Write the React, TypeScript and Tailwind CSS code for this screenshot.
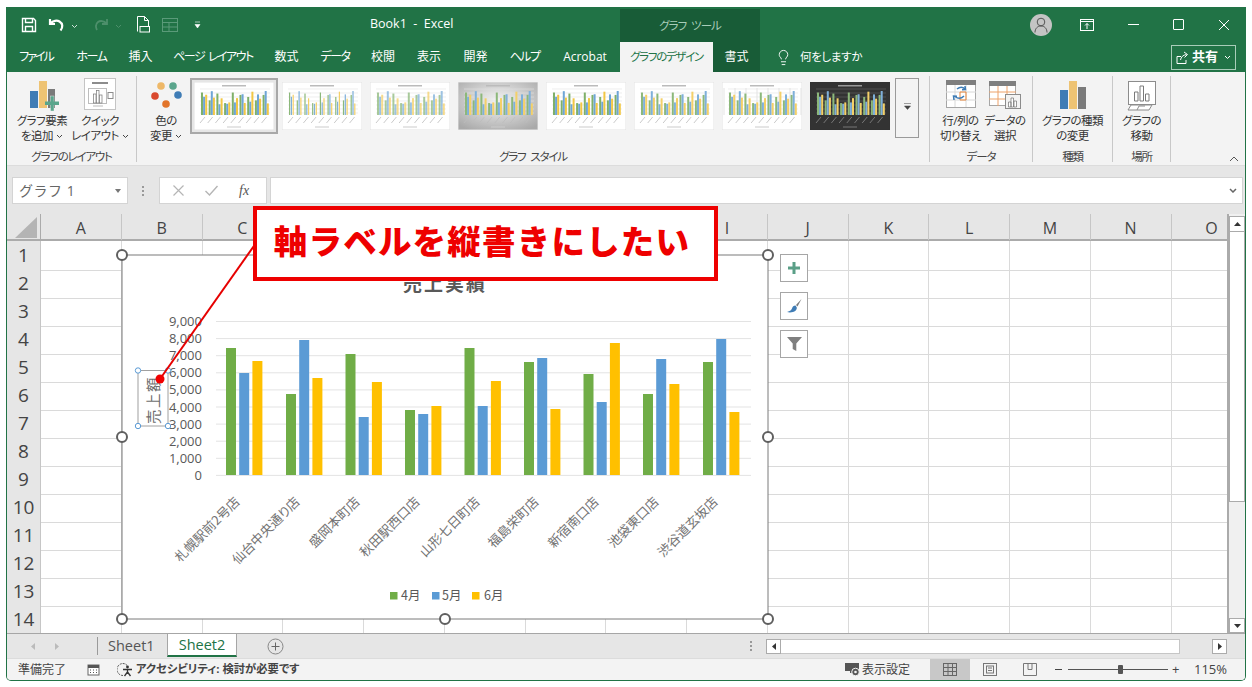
import { Lightbulb } from "lucide-react";

const columns = ["A", "B", "C", "D", "E", "F", "G", "H", "I", "J", "K", "L", "M", "N", "O"];
const rows = [1, 2, 3, 4, 5, 6, 7, 8, 9, 10, 11, 12, 13, 14];
const tabs = [
  { label: "ファイル", width: "w-[58px] tracking-[-2px]" },
  { label: "ホーム", width: "w-[53px] tracking-[-1.500px]" },
  { label: "挿入", width: "w-[45px]" },
  { label: "ページ レイアウト", width: "w-[100px] tracking-[-1.500px] [word-spacing:2px]" },
  { label: "数式", width: "w-[47px]" },
  { label: "データ", width: "w-[50px] tracking-[-1.500px]" },
  { label: "校閲", width: "w-[46px]" },
  { label: "表示", width: "w-[46px]" },
  { label: "開発", width: "w-[47px]" },
  { label: "ヘルプ", width: "w-[51px] tracking-[-1.500px]" },
  { label: "Acrobat", width: "w-[70px]" },
];

// bar tops in page pixels, read off the picture: [4月, 5月, 6月]
const barTops = [
  [348, 373, 361],
  [394, 340, 378],
  [354, 417, 382],
  [410, 414, 406],
  [348, 406, 381],
  [362, 358, 409],
  [374, 402, 343],
  [394, 359, 384],
  [362, 339, 412],
];
const groupLefts = [226, 286, 345.5, 405, 464.5, 524, 583.5, 643, 703];
const stores = [
  { name: "札幌駅前2号店", x: 237 },
  { name: "仙台中央通り店", x: 297 },
  { name: "盛岡本町店", x: 357 },
  { name: "秋田駅西口店", x: 417 },
  { name: "山形七日町店", x: 477 },
  { name: "福島栄町店", x: 536 },
  { name: "新宿南口店", x: 596 },
  { name: "池袋東口店", x: 656 },
  { name: "渋谷道玄坂店", x: 715 },
];
const ticks = ["9,000", "8,000", "7,000", "6,000", "5,000", "4,000", "3,000", "2,000", "1,000", "0"];
const seriesColors = ["#70ad47", "#5b9bd5", "#ffc000"];
const handles = [
  [122, 255],
  [768, 255],
  [122, 437],
  [768, 437],
  [122, 619],
  [445, 619],
  [768, 619],
];

const Chevron = ({ color = "#444" }: { color?: string }) => (
  <svg width="7" height="5" viewBox="0 0 7 5" className="inline-block ml-[3px] align-middle">
    <path d="M1 1l2.5 2.5L6 1" fill="none" stroke={color} strokeWidth="1" />
  </svg>
);

const MiniChart = ({ bg, dark, grid, thin, striped, heavy }: { bg: string; dark?: boolean; grid?: boolean; thin?: boolean; striped?: boolean; heavy?: boolean }) => {
  const colors = heavy ? ["#7fb069", "#6ea5d6", "#f2c744"] : ["#8cb87a", "#7fb0da", "#f4d068"];
  return (
    <svg width="80" height="48" viewBox="0 0 80 48" className="block">
      <defs>
        <radialGradient id="thumbGray" cx="50%" cy="40%" r="70%">
          <stop offset="0%" stopColor="#f4f4f4" />
          <stop offset="100%" stopColor="#a9a9a9" />
        </radialGradient>
      </defs>
      <rect width="80" height="48" fill={bg} stroke={dark ? "#333" : "#e2e2e2"} strokeWidth="1" />
      <rect x="28" y="3" width="24" height="1.5" fill={dark ? "#999" : "#bbb"} />
      {grid &&
        [0, 1, 2, 3, 4, 5, 6, 7].map((i) => <line key={i} x1={i * 11 + 2} y1="6" x2={i * 11 + 2} y2="33" stroke="#e3e3e3" />)}
      {[7, 11, 15, 19, 23, 27, 31].map((y) => (
        <line key={y} x1="6" y1={y} x2="76" y2={y} stroke={dark ? "#666" : "#e2e2e2"} strokeWidth="0.6" />
      ))}
      {barTops.map((group, i) =>
        group.map((top, s) => (
          <rect
            key={`${i}-${s}`}
            x={7 + i * 7.7 + s * (thin ? 1.8 : 2.1)}
            y={(top - 339) * 0.17 + 9}
            width={thin ? 1.2 : 2}
            height={33 - ((top - 339) * 0.17 + 9)}
            fill={colors[s]}
            opacity={striped ? 0.75 : 1}
          />
        ))
      )}
      {barTops.map((_, i) => (
        <line key={i} x1={6 + i * 7.7} y1="41" x2={11 + i * 7.7} y2="35" stroke={dark ? "#888" : "#bdbdbd"} strokeWidth="0.8" />
      ))}
      <rect x="33" y="44.5" width="14" height="1" fill={dark ? "#777" : "#ccc"} />
    </svg>
  );
};

const AddElementIcon = () => (
  <svg width="30" height="30" viewBox="0 0 30 30" className="mt-[2px]">
    <rect x="1" y="10" width="8" height="17" fill="#3f7cb5" />
    <rect x="10" y="0" width="8" height="27" fill="#eec373" />
    <rect x="19" y="8" width="7" height="19" fill="#7a7a7a" />
    <rect x="21.500" y="15" width="3.500" height="15" fill="#5aa58c" stroke="#f3f3f3" strokeWidth="0.4" />
    <rect x="16" y="20.500" width="14" height="3.500" fill="#5aa58c" />
  </svg>
);

const QuickLayoutIcon = () => (
  <svg width="32" height="32" viewBox="0 0 32 32" className="-mt-[1px]">
    <rect x="0.5" y="0.5" width="31" height="31" fill="#fff" stroke="#c4c4c4" />
    <rect x="8" y="4" width="16" height="2" fill="#8c8c8c" />
    <rect x="4.5" y="10.5" width="18" height="15" fill="#fff" stroke="#bdbdbd" />
    <rect x="9.5" y="16" width="2.5" height="9" fill="#fff" stroke="#777" strokeWidth="0.7" />
    <rect x="12.5" y="12.5" width="2.5" height="12.5" fill="#fff" stroke="#777" strokeWidth="0.7" />
    <rect x="15.5" y="17" width="2.5" height="8" fill="#fff" stroke="#777" strokeWidth="0.7" />
    <rect x="24" y="14.5" width="5" height="6" fill="#fff" stroke="#8c8c8c" />
    <rect x="9" y="27.5" width="10" height="1" fill="#bbb" />
  </svg>
);

const ColorIcon = () => (
  <svg width="32" height="30" viewBox="0 0 32 30" className="mt-[2px]">
    <circle cx="11" cy="5" r="3.800" fill="#eeb868" />
    <circle cx="23" cy="5" r="3.800" fill="#5aa58c" />
    <circle cx="5" cy="15" r="3.800" fill="#d9492e" />
    <circle cx="28" cy="14" r="3.800" fill="#3f7cb5" />
    <circle cx="16" cy="23" r="3.800" fill="#e2742a" />
  </svg>
);

const SwitchIcon = () => (
  <svg width="30" height="28" viewBox="0 0 30 28" className="mt-[1px]">
    <rect x="0.5" y="0.5" width="29" height="27" fill="#fff" stroke="#a6a6a6" />
    <rect x="0" y="0" width="30" height="5" fill="#7f7f7f" />
    <path d="M9 5v22M20 5v22M0 12h30M0 20h30" stroke="#d8d8d8" />
    <path d="M14 12h6v8h-6z" fill="none" stroke="#e8853a" />
    <path d="M11 9c3-2.5 6-2 8 0M19 6l.5 3.5-3.5.2" fill="none" stroke="#3f7cb5" strokeWidth="1.5" />
    <path d="M18 16c-3 3-6 3-9 .5M8 20l-.5-4 3.5.2" fill="none" stroke="#3f7cb5" strokeWidth="1.5" />
  </svg>
);

const SelectDataIcon = () => (
  <svg width="32" height="28" viewBox="0 0 32 28" className="mt-[2px]">
    <rect x="0.5" y="0.5" width="26" height="24" fill="#fff" stroke="#a6a6a6" />
    <rect x="0" y="0" width="27" height="5" fill="#7f7f7f" />
    <path d="M9 5v20M18 5v20M0 11h27M0 18h27" stroke="#eda26a" />
    <rect x="16.5" y="13.5" width="15" height="14" fill="#f3f3f3" stroke="#8c8c8c" />
    <path d="M19.5 26v-5h2.5v5zM22 26v-9h2.5v9zM25 26v-6h2.5v6z" fill="#fff" stroke="#6e6e6e" strokeWidth="0.7" />
  </svg>
);

const ChangeTypeIcon = () => (
  <svg width="30" height="30" viewBox="0 0 30 30" className="mt-[2px]">
    <rect x="2" y="9" width="8" height="19" fill="#3f7cb5" />
    <rect x="11" y="0" width="8" height="28" fill="#eec373" />
    <rect x="20" y="6" width="8" height="22" fill="#7a7a7a" />
  </svg>
);

const MoveIcon = () => (
  <svg width="30" height="30" viewBox="0 0 30 30" className="mt-[2px]">
    <rect x="1.5" y="0.5" width="27" height="23" fill="#fff" stroke="#8c8c8c" />
    <path d="M7.5 20v-9h3.5v9zM13 20V5h3.500v15zM18.5 20v-7H22v7z" fill="#fff" stroke="#7a7a7a" />
    <path d="M1 29l3-5h21l-3 5zM10 29l2-4h6" fill="#fff" stroke="#8c8c8c" />
  </svg>
);

const RibbonLabel = ({ children }: { children: React.ReactNode }) => (
  <div className="text-[11.5px] leading-[15px] tracking-[-0.5px] text-[#333] text-center whitespace-nowrap">{children}</div>
);

const GroupTitle = ({ children }: { children: React.ReactNode }) => (
  <div className="h-[18px] text-[11.5px] leading-[26px] tracking-[-1.200px] [word-spacing:3px] text-[#444] text-center whitespace-nowrap">{children}</div>
);

export default function App() {
  return (
    <div className="relative w-[1252px] h-[687px] overflow-hidden bg-white pt-[7px] pl-[6px] [font-family:'Open_Sans','Noto_Sans_CJK_JP',sans-serif] [font-feature-settings:'palt']">
      <div className="flex flex-col w-[1240px] h-[674px] border-l border-r border-b border-[#217346] rounded-b-[5px] overflow-hidden bg-[#f3f3f3]">
        {/* title bar */}
        <div className="flex items-stretch h-[35px] bg-[#217346] text-white shrink-0">
          <div className="flex items-center w-[363px] pl-[14px] gap-[11px]">
            <svg width="16" height="16" viewBox="0 0 16 16">
              <path d="M1.5 1.5h11l2 2v11h-13z" fill="none" stroke="#fff" strokeWidth="1.4" />
              <path d="M4.5 1.5v4h7v-4M4.5 14.5v-5h7v5" fill="none" stroke="#fff" strokeWidth="1.4" />
            </svg>
            <svg width="17" height="15" viewBox="0 0 17 15">
              <path d="M2 2v5h5M2.5 6.5C5 3.5 9 3 11.5 4.5 15 6.5 15 10.5 12.5 13.5" fill="none" stroke="#fff" strokeWidth="2.2" />
            </svg>
            <div className="-ml-[8px]"><Chevron color="#cfe3d8" /></div>
            <svg width="15" height="13" viewBox="0 0 15 13" className="ml-[5px]">
              <path d="M13 1v5H8M12.5 5.500C10 2.500 6 2.500 4 4 1.500 6 1.500 9 3 12" fill="none" stroke="#4d8f6b" strokeWidth="1.800" />
            </svg>
            <div className="-ml-[8px]"><Chevron color="#4d8f6b" /></div>
            <svg width="14" height="17" viewBox="0 0 14 17" className="ml-[3px]">
              <path d="M1.500 15.500v-15h7l4 4v6M8.500 .5v4h4" fill="none" stroke="#fff" strokeWidth="1" />
              <rect x="4" y="10.500" width="9.500" height="5.500" fill="#217346" stroke="#fff" />
            </svg>
            <svg width="16" height="14" viewBox="0 0 16 14" className="ml-[1px]">
              <rect x="0.5" y="0.5" width="15" height="13" fill="none" stroke="#5a9a79" />
              <path d="M0 4.500h16M0 9h16M7 4.500V14" stroke="#5a9a79" />
            </svg>
            <svg width="7" height="8" viewBox="0 0 7 8" className="ml-[5px]">
              <path d="M1 1h5M1 3.500h5L3.500 7z" fill="#fff" stroke="#fff" strokeWidth="0.6" />
            </svg>
          </div>
          <div className="flex items-center w-[250px] text-[12.5px]">Book1&nbsp; -&nbsp; Excel</div>
          <div className="flex items-center justify-center w-[140px] bg-[#185c37] text-[11.5px] tracking-[-1px] [word-spacing:3px] text-[#a9cdb9] mt-[2px]">グラフ ツール</div>
          <div className="flex-1 flex items-center pl-[270px]">
            <div className="w-[22px] h-[22px] rounded-full bg-[#c4c4c4] flex items-center justify-center">
              <svg width="14" height="16" viewBox="0 0 14 16">
                <circle cx="7" cy="5" r="3.800" fill="none" stroke="#555" />
                <path d="M1 15.500c0-4 2.500-6.500 6-6.500s6 2.500 6 6.500" fill="none" stroke="#555" />
              </svg>
            </div>
            <svg width="14" height="13" viewBox="0 0 14 13" className="ml-[28px]">
              <rect x="0.500" y="1.500" width="13" height="11" fill="none" stroke="#fff" />
              <path d="M0 3.500h14M7 11V5.500M5 7.500l2-2 2 2" fill="none" stroke="#fff" />
            </svg>
            <div className="ml-[34px] w-[11px] h-[1px] bg-white" />
            <div className="ml-[34px] w-[11px] h-[11px] border border-white rounded-[1px]" />
            <svg width="12" height="12" viewBox="0 0 12 12" className="ml-[34px]">
              <path d="M1 1l10 10M11 1L1 11" stroke="#fff" strokeWidth="1" />
            </svg>
          </div>
        </div>

        {/* tab row */}
        <div className="flex items-stretch h-[30px] bg-[#217346] text-white text-[12px] shrink-0">
          {tabs.map((tab) => (
            <div key={tab.label} className={`flex items-center justify-center whitespace-nowrap ${tab.width}`}>
              {tab.label}
            </div>
          ))}
          <div className="flex items-center justify-center w-[93px] bg-[#f3f3f3] text-[#217346] text-[11.5px] tracking-[-1.300px] whitespace-nowrap">グラフのデザイン</div>
          <div className="flex items-center justify-center w-[47px] bg-[#185c37]">書式</div>
          <div className="flex items-center ml-[15px] gap-[8px] text-[11.5px] tracking-[-0.3px]">
            <Lightbulb size={17} strokeWidth={1.300} />
            <span>何をしますか</span>
          </div>
          <div className="flex-1" />
          <div className="flex items-center justify-center self-center w-[65px] h-[25px] mr-[9px] border border-[#a9cdb9] gap-[3px]">
            <svg width="13" height="13" viewBox="0 0 13 13">
              <path d="M1 5.500v7h9V9M1 5.500h4M4.500 9c.5-3 2.500-5 6-5.500M8 1l3.500 2.500L8.500 6.500" fill="none" stroke="#fff" />
            </svg>
            <span className="font-bold text-[13px]">共有</span>
            <Chevron color="#fff" />
          </div>
        </div>

        {/* ribbon */}
        <div className="flex h-[93px] bg-[#f3f3f3] shrink-0 relative">
          <div className="flex flex-col w-[130px] pt-[3px] border-r border-[#c8c8c8] mt-[4px] mb-[3px]">
            <div className="flex flex-1 pl-[10px]">
              <div className="flex flex-col items-center w-[54px]">
                <div className="h-[34px] flex items-start"><AddElementIcon /></div>
                <div className="mr-[4px]">
                  <RibbonLabel>グラフ要素</RibbonLabel>
                  <RibbonLabel>を追加<Chevron /></RibbonLabel>
                </div>
              </div>
              <div className="flex flex-col items-center w-[58px]">
                <div className="h-[34px] flex items-start"><QuickLayoutIcon /></div>
                <div>
                  <RibbonLabel>クイック</RibbonLabel>
                  <RibbonLabel>レイアウト<Chevron /></RibbonLabel>
                </div>
              </div>
            </div>
            <GroupTitle>グラフのレイアウト</GroupTitle>
          </div>
          <div className="flex flex-col w-[793px] border-r border-[#c8c8c8] mt-[4px] mb-[3px] pt-[3px]">
            <div className="flex flex-1">
              <div className="flex flex-col items-center w-[53px] pl-[5px]">
                <div className="h-[34px]"><ColorIcon /></div>
                <div>
                  <RibbonLabel>色の</RibbonLabel>
                  <RibbonLabel>変更<Chevron /></RibbonLabel>
                </div>
              </div>
              <div className="flex h-[60px] -mt-[1px]">
                <div className="flex items-center justify-center w-[88px] h-[56px] bg-[#e6e6e6] border-[2px] border-[#a8a8a8]">
                  <MiniChart bg="#fff" heavy />
                </div>
                <div className="flex items-center justify-center w-[88px] h-[56px]"><MiniChart bg="#fff" thin /></div>
                <div className="flex items-center justify-center w-[88px] h-[56px]"><MiniChart bg="#fff" striped /></div>
                <div className="flex items-center justify-center w-[88px] h-[56px]"><MiniChart bg="url(#thumbGray)" /></div>
                <div className="flex items-center justify-center w-[88px] h-[56px]"><MiniChart bg="#fff" heavy /></div>
                <div className="flex items-center justify-center w-[88px] h-[56px]"><MiniChart bg="#fff" /></div>
                <div className="flex items-center justify-center w-[88px] h-[56px]"><MiniChart bg="#fff" grid /></div>
                <div className="flex items-center justify-center w-[88px] h-[56px]"><MiniChart bg="#333333" dark /></div>
                <div className="flex justify-center pt-[24px] w-[24px] h-[60px] ml-[1px] border border-[#9a9a9a]">
                  <svg width="9" height="7" viewBox="0 0 9 7">
                    <path d="M1 .5h7M1.500 3h6L4.500 6.500z" fill="#444" stroke="#444" strokeWidth="0.500" />
                  </svg>
                </div>
              </div>
            </div>
            <GroupTitle>グラフ スタイル</GroupTitle>
          </div>
          <div className="flex flex-col w-[103px] border-r border-[#c8c8c8] mt-[4px] mb-[3px] pt-[3px]">
            <div className="flex flex-1 pl-[8px]">
              <div className="flex flex-col items-center w-[45px]">
                <div className="h-[34px]"><SwitchIcon /></div>
                <div>
                  <RibbonLabel>行/列の</RibbonLabel>
                  <RibbonLabel>切り替え</RibbonLabel>
                </div>
              </div>
              <div className="flex flex-col items-center w-[44px]">
                <div className="h-[34px]"><SelectDataIcon /></div>
                <div>
                  <RibbonLabel>データの</RibbonLabel>
                  <RibbonLabel>選択</RibbonLabel>
                </div>
              </div>
            </div>
            <GroupTitle>データ</GroupTitle>
          </div>
          <div className="flex flex-col w-[80px] border-r border-[#c8c8c8] mt-[4px] mb-[3px] pt-[3px]">
            <div className="flex flex-col flex-1 items-center">
              <div className="h-[34px]"><ChangeTypeIcon /></div>
              <div>
                <RibbonLabel>グラフの種類</RibbonLabel>
                <RibbonLabel>の変更</RibbonLabel>
              </div>
            </div>
            <GroupTitle>種類</GroupTitle>
          </div>
          <div className="flex flex-col w-[58px] border-r border-[#c8c8c8] mt-[4px] mb-[3px] pt-[3px]">
            <div className="flex flex-col flex-1 items-center">
              <div className="h-[34px]"><MoveIcon /></div>
              <div>
                <RibbonLabel>グラフの</RibbonLabel>
                <RibbonLabel>移動</RibbonLabel>
              </div>
            </div>
            <GroupTitle>場所</GroupTitle>
          </div>
          <div className="flex-1 flex items-end justify-end pr-[6px] pb-[3px]">
            <svg width="10" height="6" viewBox="0 0 10 6">
              <path d="M1 5l4-4 4 4" fill="none" stroke="#555" />
            </svg>
          </div>
        </div>

        {/* formula bar */}
        <div className="flex items-center h-[49px] pt-[1px] bg-[#e6e6e6] shrink-0 pl-[5px] pr-[2px] border-t border-[#dcdcdc]">
          <div className="flex items-center justify-between w-[116px] h-[27px] px-[6px] bg-white border border-[#d4d4d4] text-[14px] text-[#666]">
            <span className="tracking-[0.5px] [font-feature-settings:normal]">グラフ 1</span>
            <svg width="6" height="4" viewBox="0 0 6 4"><path d="M0 0h6L3 4z" fill="#777" /></svg>
          </div>
          <div className="flex flex-col gap-[2px] ml-[14px] mr-[15px]">
            <div className="w-[2px] h-[2px] bg-[#999]" />
            <div className="w-[2px] h-[2px] bg-[#999]" />
            <div className="w-[2px] h-[2px] bg-[#999]" />
          </div>
          <div className="flex items-center w-[108px] h-[27px] bg-white border border-[#d4d4d4] pl-[12px] gap-[19px]">
            <svg width="13" height="13" viewBox="0 0 13 13"><path d="M1.500 1.500l10 10M11.500 1.500l-10 10" stroke="#b5b5b5" strokeWidth="1.200" /></svg>
            <svg width="15" height="13" viewBox="0 0 15 13"><path d="M1.500 7l4 4 8-9" fill="none" stroke="#b5b5b5" strokeWidth="1.400" /></svg>
            <span className="text-[14px] italic text-[#555] [font-family:'Liberation_Serif',serif] ml-[1px]">fx</span>
          </div>
          <div className="flex items-center justify-end flex-1 h-[27px] ml-[3px] pr-[5px] bg-white border border-[#d4d4d4]">
            <svg width="8" height="5" viewBox="0 0 8 5"><path d="M1 1l3 3 3-3" fill="none" stroke="#666" strokeWidth="1.500" /></svg>
          </div>
        </div>

        {/* sheet */}
        <div className="flex h-[419px] shrink-0 bg-white">
          <div className="w-[1220px] overflow-hidden">
            <div className="grid grid-cols-[34px_repeat(15,80.75px)] w-[1246px] h-[27px] bg-[#e6e6e6] border-b-[2px] border-[#ababab]">
              <div className="relative border-r border-[#ababab]">
                <svg width="22" height="21" viewBox="0 0 22 21" className="absolute right-[3px] bottom-[2px]"><path d="M22 0v21H0z" fill="#b4b4b4" /></svg>
              </div>
              {columns.map((c) => (
                <div key={c} className="flex items-center justify-center pt-[2px] border-r border-[#c6c6c6] text-[16px] text-[#444]">{c}</div>
              ))}
            </div>
            {rows.map((r) => (
              <div key={r} className="grid grid-cols-[34px_repeat(15,80.75px)] w-[1246px] h-[28px]">
                <div className="flex items-center justify-center bg-[#e6e6e6] border-r border-b border-[#c6c6c6] text-[19px] text-[#444]">{r}</div>
                {columns.map((c) => (
                  <div key={c} className="border-r border-b border-[#dadada]" />
                ))}
              </div>
            ))}
          </div>
          <div className="flex flex-col w-[18px] pt-[2px] bg-[#f0f0f0] border-l-[2px] border-[#ababab]">
            <div className="flex items-center justify-center w-[16px] h-[16px] bg-white border border-[#ababab]">
              <svg width="7" height="4" viewBox="0 0 7 4"><path d="M0 4h7L3.500 0z" fill="#333" /></svg>
            </div>
            <div className="w-[16px] h-[270px] bg-white border border-[#ababab] border-t-0" />
            <div className="flex-1" />
            <div className="flex items-center justify-center w-[16px] h-[15px] bg-white border border-[#ababab]">
              <svg width="7" height="4" viewBox="0 0 7 4"><path d="M0 0h7L3.500 4z" fill="#333" /></svg>
            </div>
          </div>
        </div>

        {/* sheet tabs */}
        <div className="flex items-stretch h-[25px] bg-[#e6e6e6] border-t border-[#a6a6a6] shrink-0 text-[14.500px]">
          <div className="flex items-center w-[90px] pl-[24px] gap-[20px]">
            <svg width="4" height="7" viewBox="0 0 4 7"><path d="M4 0v7L0 3.500z" fill="#bbb" /></svg>
            <svg width="4" height="7" viewBox="0 0 4 7"><path d="M0 0v7l4-3.500z" fill="#bbb" /></svg>
          </div>
          <div className="flex items-center w-[70px] pl-[10px] border-l border-[#9a9a9a] my-[3px] text-[#555]">Sheet1</div>
          <div className="flex items-center justify-center w-[70px] bg-white text-[#217346] border-l border-r border-[#a6a6a6] border-b-[2px] border-b-[#217346] mb-[1px]">Sheet2</div>
          <div className="flex items-center pl-[30px] w-[509px]">
            <svg width="17" height="17" viewBox="0 0 17 17"><circle cx="8.500" cy="8.500" r="7.500" fill="none" stroke="#888" /><path d="M8.500 4.500v8M4.500 8.500h8" stroke="#666" /></svg>
          </div>
          <div className="flex items-center w-[20px] pl-[4px]">
            <div className="flex flex-col gap-[2px]">
              <div className="w-[2px] h-[2px] bg-[#999]" />
              <div className="w-[2px] h-[2px] bg-[#999]" />
              <div className="w-[2px] h-[2px] bg-[#999]" />
            </div>
          </div>
          <div className="flex items-center flex-1 pr-[18px]">
            <div className="flex items-center justify-center w-[15px] h-[15px] bg-white border border-[#ababab]">
              <svg width="4" height="7" viewBox="0 0 4 7"><path d="M4 0v7L0 3.500z" fill="#333" /></svg>
            </div>
            <div className="w-[399px] h-[15px] bg-white border border-[#c6c6c6] border-l-0" />
            <div className="flex-1" />
            <div className="flex items-center justify-center w-[15px] h-[15px] bg-white border border-[#ababab]">
              <svg width="4" height="7" viewBox="0 0 4 7"><path d="M0 0v7l4-3.500z" fill="#333" /></svg>
            </div>
          </div>
        </div>

        {/* status bar */}
        <div className="flex items-stretch flex-1 bg-[#f3f3f3] border-t border-[#dcdcdc] text-[12px] text-[#444]">
          <div className="flex items-center pl-[11px] w-[80px]">準備完了</div>
          <div className="flex items-center w-[30px]">
            <svg width="13" height="13" viewBox="0 0 13 13">
              <rect x="1" y="2" width="11" height="10" fill="#fff" stroke="#666" />
              <rect x="1" y="2" width="11" height="3" fill="#555" />
              <path d="M3 7h1M6 7h1M9 7h1M3 9.500h1M6 9.500h1M9 9.500h1" stroke="#555" />
            </svg>
          </div>
          <div className="flex items-center w-[728px] gap-[1px]">
            <svg width="18" height="15" viewBox="0 0 18 15">
              <path d="M6 13.500a6 6 0 0 1 0-12c2 0 3.500 1 4.500 2.500" fill="none" stroke="#555" strokeDasharray="2 1" />
              <circle cx="10.500" cy="5" r="1.400" fill="#333" />
              <path d="M6 7.500h9M10.500 7v3l-3 4M10.500 10l3 4" fill="none" stroke="#333" strokeWidth="1.300" />
            </svg>
            <span className="font-bold text-[11.300px] whitespace-nowrap">アクセシビリティ: 検討が必要です</span>
          </div>
          <div className="flex items-center w-[85px] gap-[1px]">
            <svg width="16" height="15" viewBox="0 0 16 15">
              <path d="M0 1h14v7H8v3H5V9H0z" fill="#555" />
              <circle cx="10.500" cy="10" r="3.800" fill="#555" stroke="#f3f3f3" />
              <circle cx="10.500" cy="10" r="1.300" fill="#f3f3f3" />
            </svg>
            <span className="whitespace-nowrap">表示設定</span>
          </div>
          <div className="flex items-center justify-center w-[40px] bg-[#c8c8c8]">
            <svg width="14" height="13" viewBox="0 0 14 13"><rect x="0.500" y="0.500" width="13" height="12" fill="none" stroke="#666" /><path d="M5 0v13M9.500 0v13M0 4.500h14M0 8.500h14" stroke="#666" /></svg>
          </div>
          <div className="flex items-center justify-center w-[40px]">
            <svg width="14" height="13" viewBox="0 0 14 13"><rect x="0.500" y="0.500" width="13" height="12" fill="none" stroke="#777" /><rect x="3.500" y="3" width="7" height="7" fill="none" stroke="#777" /><path d="M5 5h4M5 7.500h4" stroke="#777" /></svg>
          </div>
          <div className="flex items-center justify-center w-[40px]">
            <svg width="14" height="13" viewBox="0 0 14 13"><path d="M.5.500h13v12H.5zM5 .5v6h4V.5" fill="none" stroke="#777" /></svg>
          </div>
          <div className="flex items-center pl-[5px] w-[135px]">
            <div className="w-[7px] h-[1px] bg-[#444]" />
            <div className="relative w-[100px] h-[1px] ml-[6px] bg-[#555]">
              <div className="absolute left-[50px] -top-[4px] w-[5px] h-[9px] bg-[#555] rounded-[1px]" />
            </div>
            <span className="ml-[4px] text-[13px] leading-none">+</span>
          </div>
          <div className="flex items-center text-[13px] pl-[9px]">115%</div>
        </div>
      </div>

      {/* chart, floating over the cells */}
      <div className="absolute left-[122px] top-[255px] w-[646px] h-[364px] bg-white">
        <svg width="646" height="364" viewBox="122 255 646 364" className="block overflow-visible" fontFamily="'Noto Sans CJK JP', sans-serif">
          <rect x="122" y="255" width="646" height="364" fill="#fff" stroke="#7a7a7a" />
          <text x="445" y="291" textAnchor="middle" fontSize="19" fontWeight="700" fill="#595959" letterSpacing="2">売上実績</text>
          {ticks.map((label, i) => (
            <g key={label}>
              <line x1="216" x2="751" y1={321.500 + i * 17.100} y2={321.500 + i * 17.100} stroke="#e3e3e3" />
              <text x="202" y={326 + i * 17.100} textAnchor="end" fontSize="13" fontFamily="'Open Sans', sans-serif" fill="#595959">{label}</text>
            </g>
          ))}
          {barTops.map((group, i) =>
            group.map((top, s) => (
              <rect key={`${i}-${s}`} x={groupLefts[i] + s * 13.200} y={top} width="10" height={475 - top} fill={seriesColors[s]} />
            ))
          )}
          {stores.map((store) => (
            <text key={store.name} x={store.x} y="499" textAnchor="end" fontSize="13" fill="#737373" transform={`rotate(-45 ${store.x} 499)`} dy="5">{store.name}</text>
          ))}
          <rect x="390" y="592" width="7.500" height="7.500" fill="#70ad47" />
          <text x="401" y="600" fontSize="12.500" fill="#595959">4月</text>
          <rect x="432" y="592" width="7.500" height="7.500" fill="#5b9bd5" />
          <text x="442" y="600" fontSize="12.500" fill="#595959">5月</text>
          <rect x="472" y="592" width="7.500" height="7.500" fill="#ffc000" />
          <text x="484" y="600" fontSize="12.500" fill="#595959">6月</text>

          <rect x="138" y="370.500" width="30" height="55.500" fill="#fff" stroke="#a0a0a0" strokeWidth="1" />
          <text x="0" y="0" textAnchor="middle" fontSize="14.500" fill="#6e6e6e" letterSpacing="1.500" transform="translate(159 400) rotate(-90)">売上額</text>
          {[[138, 370.500], [168, 370.500], [138, 426], [168, 426]].map(([x, y]) => (
            <circle key={`${x}-${y}`} cx={x} cy={y} r="2.700" fill="#fff" stroke="#5b9bd5" />
          ))}
          {handles.map(([x, y]) => (
            <circle key={`${x}-${y}`} cx={x} cy={y} r="5" fill="#fff" stroke="#5f5f5f" strokeWidth="2" />
          ))}
          <line x1="256" y1="243" x2="160" y2="379" stroke="#e60000" strokeWidth="2" />
          <circle cx="160" cy="379" r="4.500" fill="#f00000" />
        </svg>
      </div>

      {/* chart side buttons */}
      <div className="absolute left-[780px] top-[254px] flex flex-col gap-[10px]">
        <div className="flex items-center justify-center w-[28px] h-[28px] bg-white border border-[#a6a6a6]">
          <svg width="12" height="12" viewBox="0 0 12 12"><path d="M4.500 0h3v4.500H12v3H7.500V12h-3V7.500H0v-3h4.500z" fill="#5a9f87" /></svg>
        </div>
        <div className="flex items-center justify-center w-[28px] h-[28px] bg-white border border-[#a6a6a6]">
          <svg width="15" height="14" viewBox="0 0 15 14">
            <path d="M14.500 0L9 6l1.500 1.500z" fill="#7a7a7a" />
            <path d="M8.500 6.500c-2 0-2.800 1-3.300 2.500C4.700 11 3 12 0 13c3 .8 6.500.3 8.500-1.300 1.200-1.200 1.500-2.500 1.200-3.500z" fill="#3f7cb5" />
          </svg>
        </div>
        <div className="flex items-center justify-center w-[28px] h-[28px] bg-white border border-[#a6a6a6]">
          <svg width="15" height="14" viewBox="0 0 15 14"><path d="M0 0h15L9.300 6.500V14L5.700 12V6.500z" fill="#7f7f7f" /></svg>
        </div>
      </div>

      {/* callout */}
      <div className="absolute left-[253px] top-[206px] flex items-center justify-center w-[465px] h-[75px] pr-[7px] pb-[6px] bg-white border-[4px] border-[#ee0000] text-[#ee0000] text-[33.500px] font-black tracking-[1.200px] whitespace-nowrap [font-feature-settings:normal] [font-family:'Noto_Sans_CJK_JP',sans-serif]">
        軸ラベルを縦書きにしたい
      </div>
    </div>
  );
}
